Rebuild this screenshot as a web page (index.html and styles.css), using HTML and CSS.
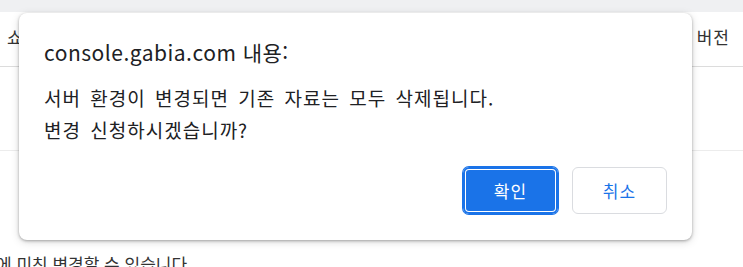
FILE: index.html
```html
<!DOCTYPE html>
<html lang="ko">
<head>
<meta charset="utf-8">
<link rel="stylesheet" href="styles.css">
</head>
<body>
<div class="topbar"></div>
<div class="thead">
  <span class="th-left">쇼</span>
  <span class="th-right">버전</span>
</div>
<div class="row"></div>
<div class="note">에 미친 변경할 수 있습니다.</div>

<div class="dialog">
  <div class="title">console.gabia.com 내용:</div>
  <div class="msg">서버 환경이 변경되면 기존 자료는 모두 삭제됩니다.<br>변경 신청하시겠습니까?</div>
  <div class="actions">
    <button class="btn ok">확인</button>
    <button class="btn cancel">취소</button>
  </div>
</div>
</body>
</html>
```

FILE: styles.css
```css
html, body {
  margin: 0;
  padding: 0;
  background: #fff;
  width: 743px;
  height: 267px;
  overflow: hidden;
  font-family: "Noto Sans CJK KR", "Noto Sans", sans-serif;
  color: #202124;
}
.topbar {
  height: 12px;
  background: #eff0f2;
}
.thead {
  height: 54px;
  border-bottom: 1px solid #dcdcdc;
  display: flex;
  justify-content: space-between;
  align-items: center;
  font-size: 17px;
  color: #333;
}
.th-left { margin-left: 7px; margin-top: -6px; }
.th-right { margin-right: 13px; margin-top: -6px; letter-spacing: 1px; }
.row {
  height: 83px;
  border-bottom: 1px solid #ececec;
}
.note {
  margin-top: 102px;
  margin-left: -4px;
  font-size: 17px;
  line-height: 22px;
  color: #333;
  white-space: nowrap;
}
.dialog {
  position: absolute;
  left: 19px;
  top: 13px;
  width: 673px;
  height: 227px;
  box-sizing: border-box;
  padding: 25px 25px 26px 25px;
  background: #fff;
  border-radius: 8px;
  box-shadow: 0 1px 3px rgba(0,0,0,0.3), 0 2px 8px rgba(0,0,0,0.15);
}
.title {
  font-size: 21px;
  line-height: 28px;
  letter-spacing: 0.5px;
  color: #202124;
}
.msg {
  margin-top: 16px;
  font-size: 19px;
  line-height: 32px;
  letter-spacing: 1px;
  word-spacing: 3px;
  color: #202124;
}
.actions {
  margin-top: 21px;
  display: flex;
  justify-content: flex-end;
  gap: 14px;
}
.btn {
  width: 95px;
  height: 47px;
  border-radius: 6px;
  font-family: inherit;
  font-size: 17px;
  letter-spacing: 1px;
  padding: 0;
  cursor: pointer;
}
.ok {
  background: #1a73e8;
  color: #fff;
  border: none;
  box-shadow: inset 0 0 0 2px #1a73e8, inset 0 0 0 3px #fff, 0 0 0 1px #1a73e8;
}
.cancel {
  background: #fff;
  color: #1a73e8;
  border: 1px solid #dadce0;
}
```
